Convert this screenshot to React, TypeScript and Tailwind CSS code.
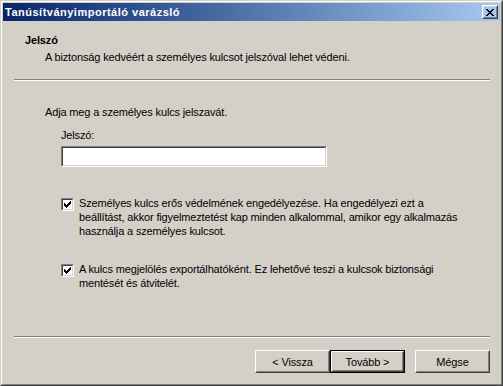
import type { ReactNode } from 'react';

const font = "font-['Tahoma','Liberation_Sans',Arial,sans-serif] text-[11px] leading-[14px] tracking-[-0.15px] text-black";

function Raised({ children, className = '' }: { children: ReactNode; className?: string }) {
  return (
    <div className={`border border-t-white border-l-white border-r-[#404040] border-b-[#404040] ${className}`}>
      <div className="w-full h-full border border-t-[#d4d0c8] border-l-[#d4d0c8] border-r-[#808080] border-b-[#808080] flex items-center justify-center">
        {children}
      </div>
    </div>
  );
}

function Sunken({ children, className = '' }: { children?: ReactNode; className?: string }) {
  return (
    <div className={`border border-t-[#808080] border-l-[#808080] border-r-white border-b-white ${className}`}>
      <div className="w-full h-full border border-t-[#404040] border-l-[#404040] border-r-[#d4d0c8] border-b-[#d4d0c8] bg-white flex items-center justify-center">
        {children}
      </div>
    </div>
  );
}

function Check() {
  return (
    <Sunken className="w-[13px] h-[13px] shrink-0">
      <svg width="7" height="7" viewBox="0 0 7 7" shapeRendering="crispEdges">
        <path d="M6 0h1v1h-1z M5 1h2v1h-2z M0 2h1v1h-1z M4 2h3v1h-3z M0 3h2v1h-2z M3 3h3v1h-3z M0 4h5v1h-5z M1 5h3v1h-3z M2 6h1v1h-1z" fill="#000" />
      </svg>
    </Sunken>
  );
}

function CheckRow({ lines }: { lines: string[] }) {
  return (
    <div className="flex gap-[5px] pl-[58px]">
      <div className="pt-[2px]">
        <Check />
      </div>
      <div className="whitespace-nowrap">
        {lines.map((l) => (
          <div key={l}>{l}</div>
        ))}
      </div>
    </div>
  );
}

function Button({ label, isDefault = false }: { label: string; isDefault?: boolean }) {
  if (isDefault) {
    return (
      <div className="w-[75px] h-[23px] border border-black">
        <Raised className="w-full h-full">{label}</Raised>
      </div>
    );
  }
  return <Raised className="w-[75px] h-[23px]">{label}</Raised>;
}

function Separator({ className = '' }: { className?: string }) {
  return (
    <div className={`ml-[11px] mr-[10px] h-[2px] border-t border-t-[#808080] border-b border-b-white ${className}`} />
  );
}

export default function App() {
  return (
    <div className={`w-[503px] h-[386px] border border-t-[#d4d0c8] border-l-[#d4d0c8] border-r-[#404040] border-b-[#404040] ${font}`}>
      <div className="w-full h-full border border-t-white border-l-white border-r-[#808080] border-b-[#808080] bg-[#d4d0c8] p-px flex flex-col">
        <div className="h-[18px] flex items-center justify-between pl-[2px] pr-[2px] bg-linear-to-r from-[#0a246a] to-[#a6caf0]">
          <span className="font-bold text-white tracking-[0.5px]">Tanúsítványimportáló varázsló</span>
          <Raised className="w-[16px] h-[14px]">
            <svg width="8" height="7" viewBox="0 0 8 7" shapeRendering="crispEdges">
              <path d="M0 0h2v1h-2z M6 0h2v1h-2z M1 1h2v1h-2z M5 1h2v1h-2z M2 2h4v1h-4z M3 3h2v1h-2z M2 4h4v1h-4z M1 5h2v1h-2z M5 5h2v1h-2z M0 6h2v1h-2z M6 6h2v1h-2z" fill="#000" />
            </svg>
          </Raised>
        </div>

        <div className="flex-1 flex flex-col">
          <div className="mt-[12px] pl-[22px] font-bold">Jelszó</div>
          <div className="mt-[3px] pl-[42px]">A biztonság kedvéért a személyes kulcsot jelszóval lehet védeni.</div>
          <Separator className="mt-[15px]" />

          <div className="mt-[24px] pl-[42px]">Adja meg a személyes kulcs jelszavát.</div>
          <div className="mt-[9px] pl-[58px]">Jelszó:</div>
          <div className="mt-[4px] pl-[58px]">
            <Sunken className="w-[266px] h-[21px]" />
          </div>

          <div className="mt-[29px]">
            <CheckRow
              lines={[
                'Személyes kulcs erős védelmének engedélyezése. Ha engedélyezi ezt a',
                'beállítást, akkor figyelmeztetést kap minden alkalommal, amikor egy alkalmazás',
                'használja a személyes kulcsot.',
              ]}
            />
          </div>
          <div className="mt-[24px]">
            <CheckRow
              lines={[
                'A kulcs megjelölés exportálhatóként. Ez lehetővé teszi a kulcsok biztonsági',
                'mentését és átvitelét.',
              ]}
            />
          </div>

          <Separator className="mt-auto" />
          <div className="mt-[12px] mb-[10px] pr-[10px] flex justify-end">
            <Button label="< Vissza" />
            <Button label="Tovább >" isDefault />
            <div className="ml-[10px]">
              <Button label="Mégse" />
            </div>
          </div>
        </div>
      </div>
    </div>
  );
}
